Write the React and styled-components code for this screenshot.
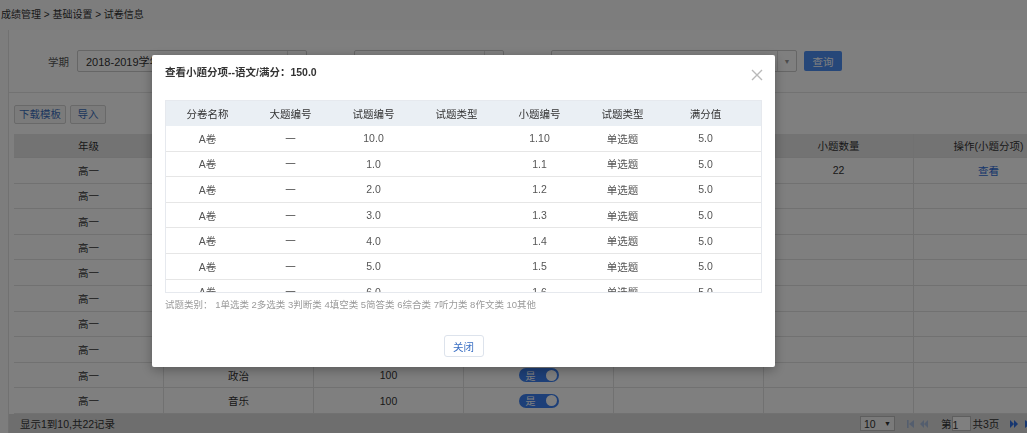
import React from "react";
import styled, { createGlobalStyle } from "styled-components";

const GlobalStyle = createGlobalStyle`
  html, body {
    margin: 0;
    padding: 0;
    overflow: hidden;
  }
  body {
    font-family: "Liberation Sans", "Noto Sans CJK SC", sans-serif;
    font-size: 10.5px;
    color: #333;
    background: #fafafa;
  }
`;

const subjects = ["语文", "数学", "英语", "物理", "化学", "生物", "历史", "地理", "政治", "音乐"];
const scores = ["150", "150", "150", "100", "100", "100", "100", "100", "100", "100"];

const items = (() => {
  const list = [{ big: "10.0", small: "1.10" }];
  for (let i = 1; i <= 21; i++) {
    if (i === 10) continue;
    list.push({ big: `${i}.0`, small: `1.${i}` });
  }
  return list;
})();

function App() {
  return (
    <Page>
      <GlobalStyle />
      <Breadcrumb>成绩管理 &gt; 基础设置 &gt; 试卷信息</Breadcrumb>
      <Panel>
        <SearchBar>
          <Label>学期</Label>
          <Select $width={230}>
            <span>2018-2019学年第一学期</span>
            <Arrow>▼</Arrow>
          </Select>
          <Label $gap={18}>年级</Label>
          <Select $width={150}>
            <span>高一</span>
            <Arrow>▼</Arrow>
          </Select>
          <Label $gap={18}>科目</Label>
          <Select $width={246}>
            <span>全部</span>
            <Arrow>▼</Arrow>
          </Select>
          <QueryButton>查询</QueryButton>
        </SearchBar>

        <Toolbar>
          <ToolButton>下载模板</ToolButton>
          <ToolButton>导入</ToolButton>
        </Toolbar>

        <Table>
          <HeadRow>
            <Cell>年级</Cell>
            <Cell>科目</Cell>
            <Cell>满分</Cell>
            <Cell>是否启用</Cell>
            <Cell>考试类型</Cell>
            <Cell>小题数量</Cell>
            <Cell>操作(小题分项)</Cell>
          </HeadRow>
          {subjects.map((s, i) => (
            <BodyRow key={s}>
              <Cell>高一</Cell>
              <Cell>{s}</Cell>
              <Cell>{scores[i]}</Cell>
              <Cell>
                <Switch>
                  <span>是</span>
                  <Knob />
                </Switch>
              </Cell>
              <Cell />
              <Cell>{i === 0 ? "22" : ""}</Cell>
              <Cell>{i === 0 ? <Link>查看</Link> : ""}</Cell>
            </BodyRow>
          ))}
        </Table>

        <Footer>
          <Summary>显示1到10,共22记录</Summary>
          <Pager>
            <PageSize>
              10 <small>▼</small>
            </PageSize>
            <PagerIcon $disabled $gap={12}>
              <svg width="7" height="8" viewBox="0 0 7 8">
                <rect x="0" y="0" width="1.6" height="8" fill="currentColor" />
                <path d="M7 0 L2 4 L7 8 Z" fill="currentColor" />
              </svg>
            </PagerIcon>
            <PagerIcon $disabled $gap={6}>
              <svg width="8" height="8" viewBox="0 0 8 8">
                <path d="M4 0 L0 4 L4 8 Z M8 0 L4 4 L8 8 Z" fill="currentColor" />
              </svg>
            </PagerIcon>
            <PageText $gap={13}>
              第<PageInput>1</PageInput>共3页
            </PageText>
            <PagerIcon $gap={11}>
              <svg width="8" height="8" viewBox="0 0 8 8">
                <path d="M0 0 L4 4 L0 8 Z M4 0 L8 4 L4 8 Z" fill="currentColor" />
              </svg>
            </PagerIcon>
            <PagerIcon $gap={7}>
              <svg width="7" height="8" viewBox="0 0 7 8">
                <path d="M0 0 L5 4 L0 8 Z" fill="currentColor" />
                <rect x="5.4" y="0" width="1.6" height="8" fill="currentColor" />
              </svg>
            </PagerIcon>
          </Pager>
        </Footer>
      </Panel>

      <Mask>
        <Modal>
          <ModalHeader>
            <ModalTitle>查看小题分项--语文/满分：150.0</ModalTitle>
            <CloseX>
              <svg width="12" height="12" viewBox="0 0 12 12">
                <path d="M1 1 L11 11 M11 1 L1 11" stroke="#b9b9b9" strokeWidth="1.4" />
              </svg>
            </CloseX>
          </ModalHeader>

          <Grid>
            <GridHead>
              <span>分卷名称</span>
              <span>大题编号</span>
              <span>试题编号</span>
              <span>试题类型</span>
              <span>小题编号</span>
              <span>试题类型</span>
              <span>满分值</span>
            </GridHead>
            <GridBody>
              {items.map((it) => (
                <GridRow key={it.small}>
                  <span>A卷</span>
                  <span>一</span>
                  <span>{it.big}</span>
                  <span />
                  <span>{it.small}</span>
                  <span>单选题</span>
                  <span>5.0</span>
                </GridRow>
              ))}
            </GridBody>
          </Grid>

          <Legend>试题类别： 1单选类 2多选类 3判断类 4填空类 5简答类 6综合类 7听力类 8作文类 10其他</Legend>

          <ModalFooter>
            <CloseButton>关闭</CloseButton>
          </ModalFooter>
        </Modal>
      </Mask>
    </Page>
  );
}

export default App;

const Page = styled.div`
  width: 1070px;
  height: 433px;
  position: relative;
`;

const Breadcrumb = styled.div`
  height: 30px;
  line-height: 30px;
  padding-left: 1px;
  font-size: 10px;
  color: #333;
`;

const Panel = styled.div`
  margin-left: 8px;
  background: #fff;
  border-left: 1px solid #e2e2e2;
`;

const SearchBar = styled.div`
  height: 62px;
  display: flex;
  align-items: center;
  padding-left: 39px;
  border-bottom: 1px solid #e5e5e5;
`;

const Label = styled.span`
  margin-left: ${(p) => p.$gap || 0}px;
  margin-right: 8px;
  color: #555;
  white-space: nowrap;
`;

const Select = styled.div`
  width: ${(p) => p.$width}px;
  height: 22px;
  box-sizing: border-box;
  border: 1px solid #ccc;
  border-radius: 2px;
  display: flex;
  align-items: center;
  justify-content: space-between;
  padding-left: 8px;
  font-size: 11px;
  color: #333;
  background: #fff;
`;

const Arrow = styled.span`
  width: 18px;
  height: 100%;
  border-left: 1px solid #ddd;
  display: flex;
  align-items: center;
  justify-content: center;
  font-size: 7px;
  color: #999;
`;

const QueryButton = styled.button`
  margin-left: 7px;
  width: 38px;
  height: 20px;
  padding: 0;
  border: none;
  border-radius: 2px;
  background: #4d8ef2;
  color: #fff;
  font: inherit;
`;

const Toolbar = styled.div`
  display: flex;
  gap: 4px;
  padding: 12px 0 10px 5px;
`;

const ToolButton = styled.button`
  min-width: 36px;
  height: 19px;
  padding: 0 4px;
  border: 1px solid #d2d2d2;
  border-radius: 2px;
  background: #f7f7f7;
  color: #3a6dbb;
  font: inherit;
  line-height: 17px;
`;

const Table = styled.div`
  margin-left: 5px;
  width: 1050px;
`;

const Row = styled.div`
  display: grid;
  grid-template-columns: repeat(7, 150px);
  box-sizing: border-box;
  border-bottom: 1px solid #e2e2e2;
`;

const HeadRow = styled(Row)`
  height: 24px;
  background: #e6e6e6;
  color: #333;
`;

const BodyRow = styled(Row)`
  height: 25.6px;
  background: #fff;
`;

const Cell = styled.div`
  display: flex;
  align-items: center;
  justify-content: center;
  border-right: 1px solid #e2e2e2;
`;

const Switch = styled.div`
  width: 40px;
  height: 14px;
  border-radius: 8px;
  background: #3b7ff0;
  display: flex;
  align-items: center;
  justify-content: space-between;
  padding: 0 2px 0 7px;
  box-sizing: border-box;
  color: #fff;
  font-size: 10px;
`;

const Knob = styled.span`
  width: 11px;
  height: 11px;
  border-radius: 50%;
  background: #fff;
`;

const Link = styled.span`
  color: #2f6cd6;
`;

const Footer = styled.div`
  height: 20px;
  display: flex;
  align-items: center;
  padding-left: 11px;
  background: #dcdcdc;
  color: #333;
`;

const Summary = styled.span`
  width: 840px;
  flex: none;
`;

const Pager = styled.div`
  display: flex;
  align-items: center;
`;

const PageSize = styled.div`
  width: 35px;
  height: 15px;
  box-sizing: border-box;
  border: 1px solid #bdbdbd;
  background: #f4f4f4;
  display: flex;
  align-items: center;
  justify-content: space-between;
  padding: 0 3px;
  font-size: 10.5px;
  small {
    font-size: 7px;
  }
`;

const PagerIcon = styled.span`
  margin-left: ${(p) => p.$gap}px;
  display: flex;
  color: ${(p) => (p.$disabled ? "#a9bcdd" : "#2f6fe0")};
`;

const PageText = styled.span`
  margin-left: ${(p) => p.$gap}px;
  display: flex;
  align-items: center;
`;

const PageInput = styled.span`
  width: 19px;
  height: 15px;
  box-sizing: border-box;
  border: 1px solid #bdbdbd;
  background: #fff;
  margin-right: 2px;
  line-height: 16px;
`;

const Mask = styled.div`
  position: fixed;
  inset: 0;
  background: rgba(0, 0, 0, 0.5);
  display: flex;
  align-items: flex-start;
  padding: 55px 0 0 152px;
`;

const Modal = styled.div`
  width: 623px;
  height: 312px;
  background: #fff;
  border-radius: 2px;
  box-shadow: 0 3px 12px rgba(0, 0, 0, 0.3);
  position: relative;
`;

const ModalHeader = styled.div`
  height: 45px;
  box-sizing: border-box;
  padding: 11px 13px 0;
`;

const ModalTitle = styled.div`
  font-size: 10.5px;
  line-height: 13px;
  font-weight: bold;
  color: #333;
`;

const CloseX = styled.span`
  position: absolute;
  top: 14px;
  right: 12px;
  display: flex;
`;

const Grid = styled.div`
  margin: 0 13px;
  width: 597px;
  height: 193px;
  box-sizing: border-box;
  border: 1px solid #e6e9ee;
  display: flex;
  flex-direction: column;
`;

const Columns = styled.div`
  display: grid;
  grid-template-columns: repeat(7, 83px);
  span {
    display: flex;
    align-items: center;
    justify-content: center;
  }
`;

const GridHead = styled(Columns)`
  height: 25px;
  flex: none;
  background: #eaeff4;
  color: #333;
`;

const GridBody = styled.div`
  flex: 1;
  overflow-y: scroll;
  &::-webkit-scrollbar {
    width: 14px;
  }
  &::-webkit-scrollbar-track {
    background: #fff;
  }
  &::-webkit-scrollbar-thumb {
    background: #c4c4c4;
    background-clip: padding-box;
    border-style: solid;
    border-color: transparent;
    border-width: 2px 2px 2px 8px;
  }
`;

const GridRow = styled(Columns)`
  height: 25.6px;
  box-sizing: border-box;
  border-bottom: 1px solid #e6e6e6;
  color: #555;
`;

const Legend = styled.div`
  height: 20px;
  padding: 4px 13px 0;
  box-sizing: border-box;
  font-size: 9.5px;
  color: #9a9a9a;
  white-space: nowrap;
`;

const ModalFooter = styled.div`
  display: flex;
  justify-content: center;
  padding-top: 22px;
`;

const CloseButton = styled.button`
  width: 40px;
  height: 22px;
  padding: 0;
  border: 1px solid #dde3ec;
  border-radius: 3px;
  background: #fff;
  color: #3a6fc4;
  font: inherit;
`;
